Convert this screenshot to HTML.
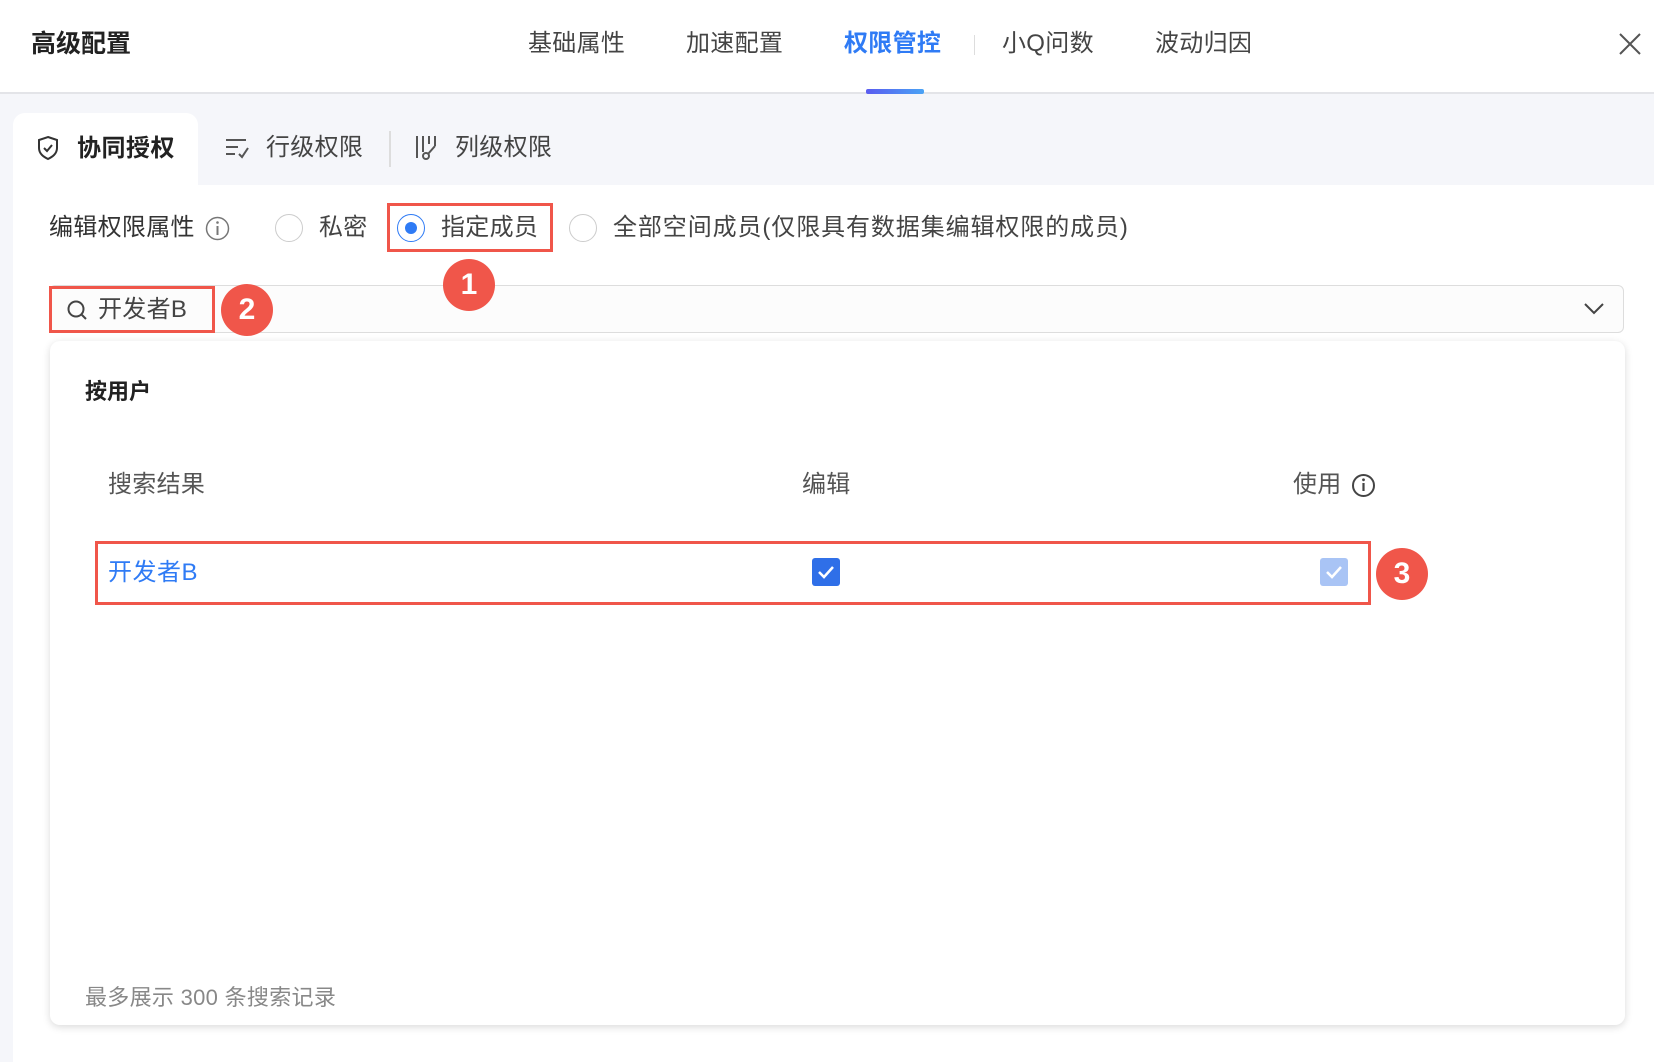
<!DOCTYPE html>
<html><head><meta charset="utf-8"><style>
*{margin:0;padding:0;box-sizing:border-box}
body{width:1654px;height:1062px;overflow:hidden;background:#f5f6fa;font-family:"Liberation Sans","Noto Sans CJK SC",sans-serif;color:#333;position:relative}
.a{position:absolute;white-space:nowrap}
.hdr{position:absolute;left:0;top:0;width:1654px;height:94px;background:#fff;border-bottom:2px solid #e3e4e8}
.t{font-size:24px;line-height:30px;color:#444;letter-spacing:0.3px}
.red{position:absolute;border:3px solid #f0564a}
.badge{position:absolute;width:52px;height:52px;border-radius:50%;background:#f0564a;color:#fff;font-size:30px;line-height:52px;text-align:center;font-weight:bold}
.radio{position:absolute;width:28px;height:28px;border-radius:50%;border:1.5px solid #ccc;background:#fff}
</style></head><body>
<div class="hdr"></div>
<div class="a" style="left:31px;top:28px;font-size:25px;line-height:32px;font-weight:bold;color:#222">高级配置</div>
<div class="a t" style="left:528px;top:29px">基础属性</div>
<div class="a t" style="left:686px;top:29px">加速配置</div>
<div class="a t" style="left:844px;top:29px;color:#2f7bf5;font-weight:bold">权限管控</div>
<div class="a" style="left:974px;top:35px;width:1px;height:20px;background:#ddd"></div>
<div class="a t" style="left:1002px;top:29px">小Q问数</div>
<div class="a t" style="left:1155px;top:29px">波动归因</div>
<div class="a" style="left:866px;top:89px;width:58px;height:5px;border-radius:2px;background:linear-gradient(90deg,#5a5cf0,#4aa3f5)"></div>
<svg class="a" style="left:1618px;top:32px" width="24" height="24"><path d="M2 2L22 22M22 2L2 22" stroke="#555" stroke-width="2"/></svg>

<div class="a" style="left:13px;top:185px;width:1641px;height:877px;background:#fff"></div>
<div class="a" style="left:13px;top:113px;width:185px;height:80px;background:#fff;border-radius:12px 12px 0 0"></div>
<svg class="a" style="left:36px;top:135px" width="24" height="26"><path d="M12 2L21 5V13C21 19 16 22 12 24C8 22 3 19 3 13V5Z" fill="none" stroke="#333" stroke-width="2"/><path d="M8 13L11 16L16 10" fill="none" stroke="#333" stroke-width="2"/></svg>
<div class="a" style="left:77px;top:133px;font-size:24px;line-height:32px;font-weight:bold;color:#222;letter-spacing:0.5px">协同授权</div>
<svg class="a" style="left:224px;top:136px" width="26" height="24"><path d="M2 4H22M2 11H14M2 18H11" stroke="#555" stroke-width="2"/><path d="M15 18L18 21L24 12" fill="none" stroke="#555" stroke-width="2"/></svg>
<div class="a t" style="left:266px;top:133px;font-size:24px">行级权限</div>
<div class="a" style="left:389px;top:131px;width:2px;height:36px;background:#ddd"></div>
<svg class="a" style="left:414px;top:134px" width="26" height="28"><path d="M3 2V24M9 2V18M15 2V10M21 2V12" stroke="#555" stroke-width="2"/><circle cx="12" cy="22" r="3" fill="none" stroke="#555" stroke-width="2"/><path d="M14 20L21 12" stroke="#555" stroke-width="2"/></svg>
<div class="a t" style="left:455px;top:133px;font-size:24px">列级权限</div>

<div class="a t" style="left:49px;top:213px;color:#333">编辑权限属性</div>
<svg class="a" style="left:205px;top:216px" width="25" height="25"><circle cx="12.5" cy="12.5" r="11" fill="none" stroke="#777" stroke-width="1.5"/><path d="M12.5 10V19" stroke="#777" stroke-width="2"/><circle cx="12.5" cy="6.5" r="1.3" fill="#777"/></svg>
<div class="radio" style="left:275px;top:214px"></div>
<div class="a t" style="left:319px;top:213px">私密</div>
<div class="radio" style="left:397px;top:214px;border-color:#2f7bf5"></div>
<div class="a" style="left:405px;top:222px;width:12px;height:12px;border-radius:50%;background:#2f7bf5"></div>
<div class="a t" style="left:441px;top:213px">指定成员</div>
<div class="radio" style="left:569px;top:214px"></div>
<div class="a t" style="left:613px;top:213px;letter-spacing:0.9px">全部空间成员(仅限具有数据集编辑权限的成员)</div>
<div class="red" style="left:387px;top:203px;width:166px;height:49px"></div>

<div class="a" style="left:49px;top:285px;width:1575px;height:48px;border:1.5px solid #ddd;border-radius:6px;background:#fcfcfc"></div>
<svg class="a" style="left:66px;top:299px" width="22" height="22"><circle cx="10" cy="10" r="7.5" fill="none" stroke="#444" stroke-width="2"/><path d="M15.5 15.5L20 20" stroke="#444" stroke-width="2"/></svg>
<div class="a t" style="left:98px;top:295px;color:#444">开发者B</div>
<svg class="a" style="left:1583px;top:300px" width="22" height="16"><path d="M2 4L11 13L20 4" fill="none" stroke="#444" stroke-width="2"/></svg>
<div class="red" style="left:49px;top:286px;width:166px;height:47px"></div>
<div class="badge" style="left:221px;top:284px">2</div>
<div class="badge" style="left:443px;top:259px">1</div>

<div class="a" style="left:50px;top:341px;width:1575px;height:684px;background:#fff;border-radius:10px;box-shadow:0 2px 8px rgba(0,0,0,.15)"></div>
<div class="a" style="left:85px;top:377px;font-size:22px;line-height:30px;font-weight:bold;color:#222">按用户</div>
<div class="a t" style="left:108px;top:470px;color:#555">搜索结果</div>
<div class="a t" style="left:802px;top:470px;color:#555">编辑</div>
<div class="a t" style="left:1293px;top:470px;color:#555">使用</div>
<svg class="a" style="left:1351px;top:473px" width="25" height="25"><circle cx="12.5" cy="12.5" r="10.5" fill="none" stroke="#444" stroke-width="2"/><path d="M12.5 10V18" stroke="#444" stroke-width="2.2"/><circle cx="12.5" cy="6.8" r="1.4" fill="#444"/></svg>
<div class="a" style="left:108px;top:558px;font-size:24px;line-height:30px;color:#2f7bf5;letter-spacing:0.5px">开发者B</div>
<svg class="a" style="left:812px;top:558px" width="28" height="28"><rect width="28" height="28" rx="3" fill="#2f6fe8"/><path d="M7 14L12 19L21 9" fill="none" stroke="#fff" stroke-width="2.5"/></svg>
<svg class="a" style="left:1320px;top:558px" width="28" height="28"><rect width="28" height="28" rx="3" fill="#a9c4f5"/><path d="M7 14L12 19L21 9" fill="none" stroke="#fff" stroke-width="2.5"/></svg>
<div class="red" style="left:95px;top:541px;width:1276px;height:64px"></div>
<div class="badge" style="left:1376px;top:548px">3</div>
<div class="a" style="left:85px;top:984px;font-size:22px;line-height:28px;color:#888;letter-spacing:0.3px">最多展示 300 条搜索记录</div>
</body></html>
